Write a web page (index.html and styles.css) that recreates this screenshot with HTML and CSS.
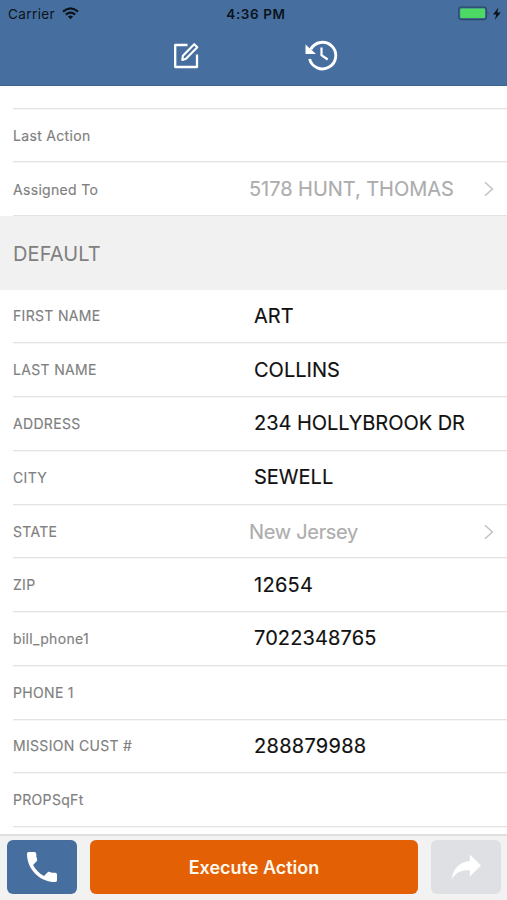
FILE: index.html
```html
<!DOCTYPE html>
<html lang="en">
<head>
<meta charset="utf-8">
<title>Contact details</title>
<link rel="stylesheet" href="styles.css">
</head>
<body>
<div class="app">
  <header class="top">
    <div class="status">
      <div class="carrier"><span class="carrier-name">Carrier</span>
        <svg class="wifi" width="17" height="13" viewBox="0 0 17 13" fill="none" stroke="#0c131c" stroke-width="2.2"><path d="M1 4.6Q8.5-1.8 16 4.6"/><path d="M3.8 7.6Q8.5 3.6 13.2 7.6"/><path d="M8.5 12.3L5.9 9.6Q8.5 7.5 11.1 9.6Z" fill="#0c131c" stroke="none"/></svg>
      </div>
      <div class="time">4:36 PM</div>
      <svg class="battery" width="44" height="15" viewBox="0 0 44 15"><rect x=".8" y="1.1" width="27.6" height="12.4" rx="2.4" fill="none" stroke="#2d4968" stroke-width="1.3"/><rect x="2.2" y="2.5" width="24.8" height="9.6" rx="1" fill="#4cd964"/><path d="M29.8 5.2q1.5 2.1 0 4.2z" fill="#2d4968"/><path d="M40.4 1.6L35 8.4h3.3L36.8 13.8l6-7.3h-3.5z" fill="#0c131c"/></svg>
    </div>
    <nav class="tools">
      <svg class="edit" width="28" height="28" viewBox="0 0 28 28" fill="none" stroke="#fff" stroke-width="2.3" stroke-linejoin="round"><path d="M15.5 4H3.2v22H25V13.5"/><path d="M10.3 19l.6-4.3L22.2 3.2l3.1 3.1L14 17.8z" stroke-width="2.1"/></svg>
      <svg class="history" width="34" height="32" viewBox="0 0 34 32" fill="none" stroke="#fff"><path d="M6.8 10.2A13.3 13.3 0 1 1 5.6 20" stroke-width="2.9"/><path d="M1.5 5.5L1.5 15H12z" fill="#fff" stroke="none"/><path d="M17.5 8.5v7.7l6.2 4.3" stroke-width="2.2"/></svg>
    </nav>
  </header>
  <main class="list">
    <div class="row blank"></div>
    <div class="row upper"><span class="label">Last Action</span></div>
    <div class="row upper"><span class="label">Assigned To</span><span class="value pick">5178 HUNT, THOMAS</span><svg class="chevron" width="10" height="16" viewBox="0 0 10 16"><path d="M1 1.2L8.4 8 1 14.8"/></svg></div>
    <h2 class="section">DEFAULT</h2>
    <div class="row"><span class="label">FIRST NAME</span><span class="value">ART</span></div>
    <div class="row"><span class="label">LAST NAME</span><span class="value">COLLINS</span></div>
    <div class="row"><span class="label">ADDRESS</span><span class="value address">234 HOLLYBROOK DR</span></div>
    <div class="row"><span class="label">CITY</span><span class="value">SEWELL</span></div>
    <div class="row upper"><span class="label">STATE</span><span class="value pick state">New Jersey</span><svg class="chevron" width="10" height="16" viewBox="0 0 10 16"><path d="M1 1.2L8.4 8 1 14.8"/></svg></div>
    <div class="row"><span class="label">ZIP</span><span class="value number">12654</span></div>
    <div class="row"><span class="label">bill_phone1</span><span class="value phone">7022348765</span></div>
    <div class="row"><span class="label">PHONE 1</span></div>
    <div class="row"><span class="label">MISSION CUST #</span><span class="value number">288879988</span></div>
    <div class="row"><span class="label">PROPSqFt</span></div>
  </main>
  <footer class="bar">
    <button class="btn call" aria-label="Call"><svg width="30" height="30" viewBox="3 3 18 18" fill="#fff"><path d="M6.62 10.79c1.44 2.83 3.76 5.14 6.59 6.59l2.2-2.2c.27-.27.67-.36 1.02-.24 1.12.37 2.33.57 3.57.57.55 0 1 .45 1 1V20c0 .55-.45 1-1 1-9.39 0-17-7.61-17-17 0-.55.45-1 1-1h3.5c.55 0 1 .45 1 1 0 1.25.2 2.45.57 3.57.11.35.03.74-.25 1.02l-2.2 2.2z"/></svg></button>
    <button class="btn execute">Execute Action</button>
    <button class="btn share" aria-label="Share"><svg width="30" height="26" viewBox="0 0 30 26" fill="#fff"><path d="M18.8.5L30 11.6 18.8 22.5v-6.3C10.5 15.7 5 18 .6 25.3 2 15.5 7.5 8 18.8 6.9z"/></svg></button>
  </footer>
</div>
</body>
</html>
```
FILE: styles.css
```css
* { box-sizing: border-box; }
body { margin: 0; font-family: Inter, "Liberation Sans", sans-serif; background: #fff; }
.app { width: 507px; height: 900px; display: flex; flex-direction: column; overflow: hidden; }
.top { height: 86px; flex: none; background: #466f9f; border-bottom: 1px solid #3d6594; }
.status { height: 27px; display: grid; grid-template-columns: 1fr auto 1fr; align-items: center; padding: 0 5px 0 8px; color: #0c131c; font-size: 13.5px; }
.carrier { display: flex; align-items: center; gap: 7px; }
.carrier-name { letter-spacing: .4px; }
.time { font-weight: 600; letter-spacing: .6px; margin-left: 2px; }
.battery { justify-self: end; }
.tools { display: flex; align-items: center; padding: 12px 0 0 172px; gap: 104px; }
.list { flex: 1; min-height: 0; overflow: hidden; }
.row { height: 53.75px; margin-left: 13px; display: flex; align-items: center; border-bottom: 1.5px solid #e3e3e3; box-shadow: 0 1px #f6f6f6; }
.upper { padding-top: 1.5px; }
.blank { height: 22.5px; }
.label { width: 241px; font-size: 14px; letter-spacing: .32px; color: #808080; -webkit-text-stroke: .15px; }
.value { font-size: 20px; color: #111; white-space: nowrap; -webkit-text-stroke: .15px; }
.address { letter-spacing: -.05px; }
.number { letter-spacing: .28px; }
.phone { letter-spacing: .12px; }
.pick { color: #adadad; margin-left: -5px; letter-spacing: -.05px; }
.state { letter-spacing: -.3px; }
.chevron { margin-left: auto; margin-right: 13px; fill: none; stroke: #c2c2c2; stroke-width: 1.5; }
.section { height: 73.5px; margin: 0; padding: 2px 13px 0; display: flex; align-items: center; background: #f1f1f1; color: #808080; font-size: 20px; font-weight: 400; letter-spacing: .1px; }
.bar { height: 66px; flex: none; display: grid; grid-template-columns: 70px 328px 70px; gap: 13px; padding: 4px 6px 6px 7px; background: #f2f2f2; border-top: 2px solid #dfdfdf; }
.btn { border: 0; padding: 0; border-radius: 6px; display: flex; align-items: center; justify-content: center; font-family: inherit; }
.call { background: #466f9f; }
.execute { background: #e36004; color: #fff8ee; font-size: 18px; font-weight: 600; }
.share { background: #dfe0e3; padding: 0 1px 1px 0; }
```
